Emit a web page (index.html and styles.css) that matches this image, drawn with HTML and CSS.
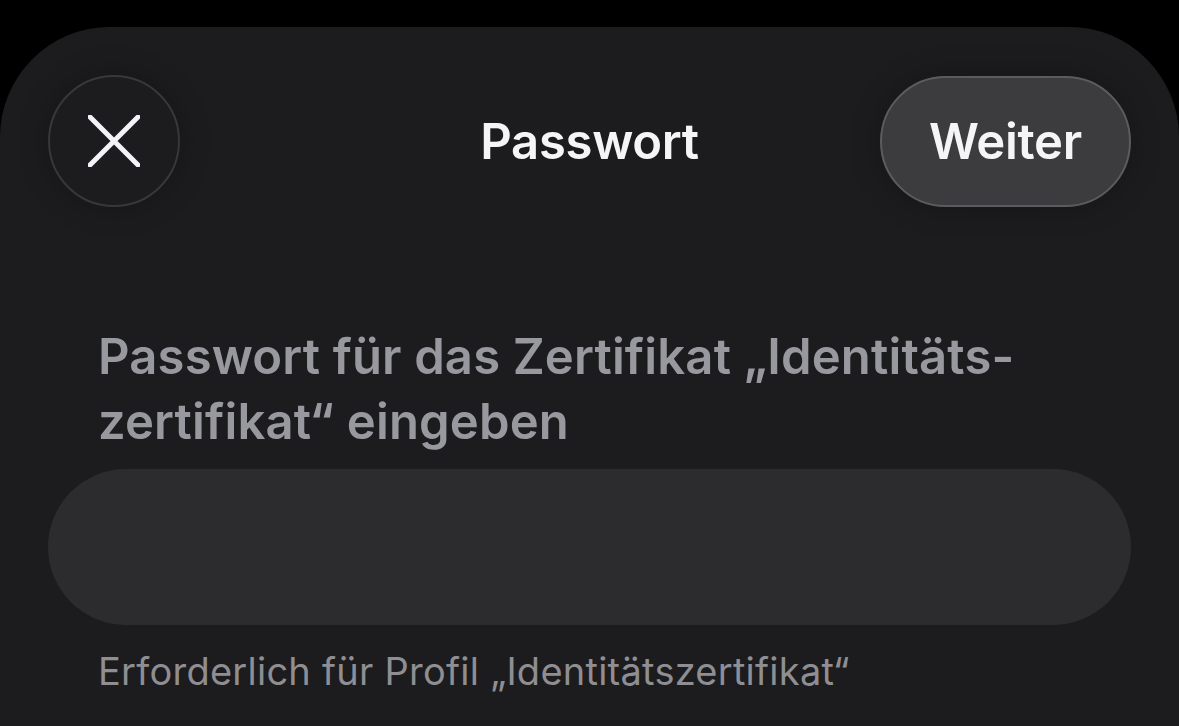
FILE: index.html
```html
<!DOCTYPE html>
<html lang="de">
<head>
<meta charset="utf-8">
<title>Passwort</title>
<link rel="stylesheet" href="styles.css">
</head>
<body>
<div class="sheet">
  <header class="nav">
    <button class="close" aria-label="Schließen">
      <svg width="52" height="52" viewBox="0 0 52 52"><path d="M2 2 L50 50 M50 2 L2 50" stroke="#f2f2f7" stroke-width="5" stroke-linecap="round" fill="none"/></svg>
    </button>
    <h1 class="title">Passwort</h1>
    <div class="right"><button class="next">Weiter</button></div>
  </header>
  <p class="label">Passwort für das Zertifikat „Identitäts-<br>zertifikat“ eingeben</p>
  <div class="field"></div>
  <p class="footer">Erforderlich für Profil „Identitätszertifikat“</p>
</div>
</body>
</html>
```
FILE: styles.css
```css
* { box-sizing: border-box; }
html, body { margin: 0; padding: 0; background: #000; height: 100%; overflow: hidden; }
body { font-family: Inter, "Noto Sans", sans-serif; }
.sheet {
  margin-top: 27px;
  height: 720px;
  background: #1c1c1e;
  border-radius: 110px 110px 0 0;
  padding: 48px 48px 0;
}
.nav {
  display: grid;
  grid-template-columns: 1fr auto 1fr;
  align-items: center;
  height: 132px;
}
.close {
  width: 132px; height: 132px;
  border-radius: 50%;
  background: #1c1c1e;
  border: 2px solid #38383b;
  display: flex; align-items: center; justify-content: center;
  padding: 0;
  box-shadow: 0 0 30px rgba(0,0,0,0.25);
}
.title {
  margin: 0;
  color: #f5f5f7;
  font-size: 49px;
  font-weight: 600;
  letter-spacing: -0.3px;
}
.right { display: flex; justify-content: flex-end; }
.next {
  width: 251px; height: 131px;
  border-radius: 66px;
  background: #3c3c3f;
  border: 2px solid #5c5c60;
  color: #f5f5f7;
  font-family: inherit;
  font-size: 49px;
  font-weight: 600;
  letter-spacing: -0.3px;
  padding: 0;
  box-shadow: 0 0 30px rgba(0,0,0,0.25);
}
.label {
  margin: 117px 0 0 50px;
  color: #98989f;
  font-size: 49px;
  font-weight: 600;
  line-height: 65px;
  letter-spacing: 0.15px;
}
.field {
  margin-top: 15px;
  height: 156px;
  border-radius: 78px;
  background: #2c2c2e;
}
.footer {
  margin: 23px 0 0 50px;
  color: #8e8e93;
  font-size: 38px;
  line-height: 46px;
  font-weight: 400;
  letter-spacing: 0.25px;
}
```
